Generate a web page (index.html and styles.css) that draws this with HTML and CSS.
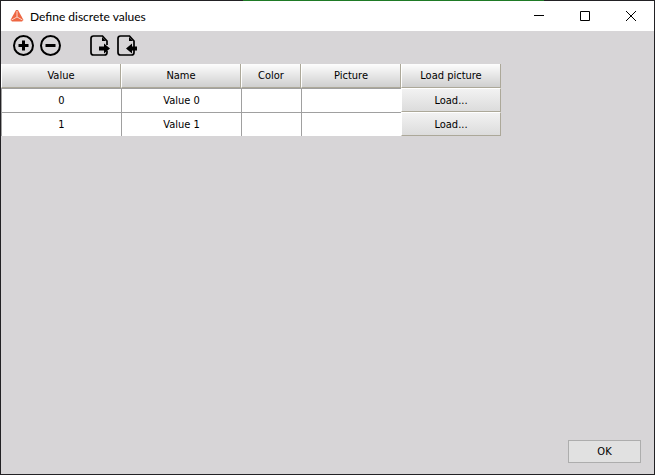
FILE: index.html
```html
<!DOCTYPE html>
<html lang="en">
<head>
  <meta charset="UTF-8" />
  <meta name="viewport" content="width=device-width, initial-scale=1.0" />
  <title>Define discrete values</title>
  <link rel="stylesheet" href="styles.css">
</head>
<body>
  <div class="window">
    <header class="titlebar">
      <svg class="logo" width="14" height="12" viewBox="0 0 14 12" aria-hidden="true">
        <path d="M6 0H8L13.5 10L12 11.5H2L.5 10Z" fill="#ee6642"/>
        <path d="M7 1V7L1.5 10M7 7L12.5 10" fill="none" stroke="#fbd3c6" stroke-width="1"/>
      </svg>
      <h1>Define discrete values</h1>
      <div class="controls">
        <button type="button" aria-label="Minimize">
          <svg width="10" height="10" viewBox="0 0 10 10"><path d="M0 4.5H10"/></svg>
        </button>
        <button type="button" aria-label="Maximize">
          <svg width="10" height="10" viewBox="0 0 10 10"><path d="M.5 .5H9.5V9.5H.5Z"/></svg>
        </button>
        <button type="button" aria-label="Close">
          <svg width="10" height="10" viewBox="0 0 10 10"><path d="M0 0L10 10M10 0L0 10"/></svg>
        </button>
      </div>
    </header>

    <div class="toolbar">
      <button type="button" aria-label="Add value">
        <svg width="21" height="21" viewBox="0 0 21 21">
          <circle cx="10.5" cy="10.5" r="9.5"/>
          <path class="thick" d="M5.5 10.5H15.5M10.5 5.5V15.5"/>
        </svg>
      </button>
      <button type="button" aria-label="Remove value">
        <svg width="21" height="21" viewBox="0 0 21 21">
          <circle cx="10.5" cy="10.5" r="9.5"/>
          <path class="thick" d="M5.5 10.5H15.5"/>
        </svg>
      </button>
      <span class="spacer"></span>
      <button type="button" aria-label="Export">
        <svg width="21" height="21" viewBox="0 0 21 21">
          <path class="page" d="M17 10V6L12.500 1H3.500Q1 1 1 3.500V17.500Q1 20 3.500 20H14.500Q17 20 17 17.500V16"/>
          <path class="solid" d="M12 2V6H16ZM9 11.500H14V8.500L20 13.500L14 18.500V15.500H9Z"/>
        </svg>
      </button>
      <button type="button" aria-label="Import">
        <svg width="21" height="21" viewBox="0 0 21 21">
          <path class="page" d="M17 12V6L12.500 1H3.500Q1 1 1 3.500V17.500Q1 20 3.500 20H14.500Q17 20 17 17.500V15"/>
          <path class="solid" d="M12 2V6H16ZM20 11.500H15V8.500L9 13.500L15 18.500V15.500H20Z"/>
        </svg>
      </button>
    </div>

    <main>
      <table>
        <colgroup>
          <col class="wide">
          <col class="wide">
          <col class="narrow">
          <col class="medium">
          <col class="medium">
        </colgroup>
        <thead>
          <tr>
            <th>Value</th>
            <th>Name</th>
            <th>Color</th>
            <th>Picture</th>
            <th>Load picture</th>
          </tr>
        </thead>
        <tbody>
          <tr>
            <td>0</td>
            <td>Value 0</td>
            <td></td>
            <td></td>
            <td class="action"><button type="button">Load...</button></td>
          </tr>
          <tr>
            <td>1</td>
            <td>Value 1</td>
            <td></td>
            <td></td>
            <td class="action"><button type="button">Load...</button></td>
          </tr>
        </tbody>
      </table>
    </main>

    <footer>
      <button type="button" class="ok">OK</button>
    </footer>
  </div>
</body>
</html>
```

FILE: styles.css
```css
* {
  box-sizing: border-box;
}

body {
  margin: 0;
  min-height: 100vh;
  padding: 1px;
  display: flex;
  background: linear-gradient(90deg, transparent 243px, #1e7a25 243px, #1e7a25 544px, transparent 544px) top / 100% 1px no-repeat #222124;
  font-family: "DejaVu Sans Condensed", "DejaVu Sans", sans-serif;
  font-size: 11px;
  color: #000;
}

.window {
  flex: 1;
  display: flex;
  flex-direction: column;
  background: #d7d5d7;
}

button {
  margin: 0;
  padding: 0;
  border: none;
  background: none;
  font: inherit;
  color: inherit;
}

svg {
  display: block;
}

.titlebar {
  display: flex;
  align-items: center;
  height: 30px;
  padding-left: 9px;
  background: #fff;
}

.titlebar h1 {
  margin: 0 0 0 6px;
  font-family: Lato, "Open Sans", sans-serif;
  font-size: 12px;
  font-weight: normal;
}

.controls {
  display: flex;
  align-self: stretch;
  margin-left: auto;
}

.controls button {
  display: flex;
  align-items: center;
  justify-content: center;
  width: 46px;
}

.controls svg {
  fill: none;
  stroke: #000;
}

.toolbar {
  display: flex;
  align-items: center;
  gap: 6px;
  height: 33px;
  padding: 0 12px 4px;
}

.toolbar svg {
  fill: none;
  stroke: #000;
  stroke-width: 2;
}

.toolbar .thick {
  stroke-width: 3;
}

.toolbar .page {
  stroke-width: 1.7;
}

.toolbar .solid {
  fill: #000;
  stroke: none;
}

.spacer {
  width: 17px;
}

main {
  flex: 1;
}

table {
  table-layout: fixed;
  width: 500px;
  border-collapse: separate;
  border-spacing: 0;
}

.wide {
  width: 120px;
}

.narrow {
  width: 60px;
}

.medium {
  width: 100px;
}

th,
td {
  height: 24px;
  padding: 0;
  text-align: center;
  font-weight: normal;
}

th {
  border-left: 1px solid #fff;
  border-right: 1px solid #aca899;
  border-bottom: 1px solid #aca899;
  background: linear-gradient(#fdfdfd, #cfcfcf);
}

td {
  border-top: 1px solid #a0a0a0;
  border-left: 1px solid #a0a0a0;
  background: #fff;
}

.action {
  border: none;
}

.action button {
  display: block;
  width: 100%;
  height: 24px;
  border: 1px solid #fff;
  border-right-color: #aca899;
  border-bottom-color: #aca899;
  background: linear-gradient(#f2f2f2, #dcdcdc);
}

footer {
  display: flex;
  justify-content: flex-end;
  padding: 0 13px 11px;
}

.ok {
  width: 73px;
  height: 23px;
  border: 1px solid #adadad;
  background: #e1e1e1;
}
```
